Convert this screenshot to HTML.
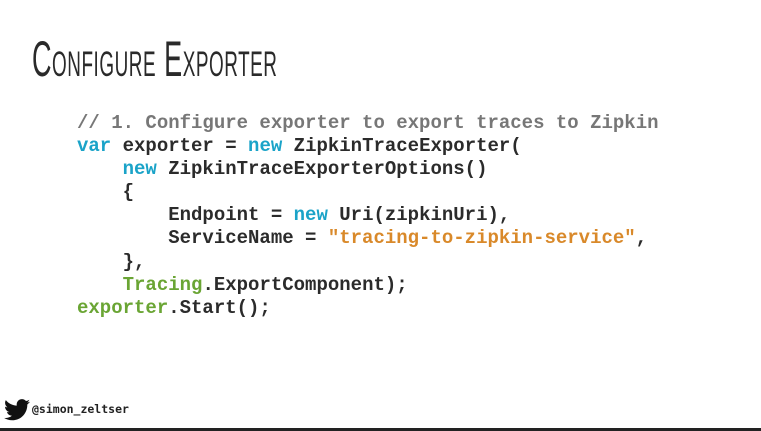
<!DOCTYPE html>
<html><head><meta charset="utf-8"><style>
html,body{margin:0;padding:0;}
body{width:761px;height:431px;background:#fff;position:relative;overflow:hidden;}
.title{position:absolute;left:32px;top:30px;font-family:"Liberation Sans",sans-serif;font-variant:small-caps;font-size:50px;color:#2a2a2a;transform:scaleX(0.54);transform-origin:left top;white-space:nowrap;letter-spacing:1px;}
pre{position:absolute;left:77px;top:112px;margin:0;font-family:"Liberation Mono",monospace;font-weight:bold;font-size:19px;line-height:23.1px;color:#2b2b2b;}
.c{color:#777;}
.k{color:#1aa3c8;}
.s{color:#d9892a;}
.g{color:#6aa534;}
.foot{position:absolute;left:32px;top:402px;font-family:"DejaVu Sans Mono","Liberation Mono",monospace;font-weight:bold;font-size:11.5px;color:#222;}
.bot{position:absolute;left:0;top:428px;width:761px;height:3px;background:#222;}
</style></head><body>
<div class="title">Configure Exporter</div>
<pre><span class="c">// 1. Configure exporter to export traces to Zipkin</span>
<span class="k">var</span> exporter = <span class="k">new</span> ZipkinTraceExporter(
    <span class="k">new</span> ZipkinTraceExporterOptions()
    {
        Endpoint = <span class="k">new</span> Uri(zipkinUri),
        ServiceName = <span class="s">"tracing-to-zipkin-service"</span>,
    },
    <span class="g">Tracing</span>.ExportComponent);
<span class="g">exporter</span>.Start();</pre>
<svg style="position:absolute;left:4px;top:399px" width="26" height="22" viewBox="0 0 24 20"><path fill="#111" d="M24 2.4c-.9.4-1.8.6-2.8.8 1-.6 1.8-1.6 2.2-2.7-1 .6-2 1-3.1 1.2C19.4.7 18.1 0 16.6 0c-2.7 0-4.9 2.2-4.9 4.9 0 .4 0 .8.1 1.1C7.7 5.8 4.1 3.900 1.7.9c-.4.7-.7 1.6-.7 2.5 0 1.7.9 3.2 2.2 4.1-.8 0-1.6-.2-2.2-.6v.1c0 2.4 1.7 4.4 3.9 4.8-.4.1-.8.2-1.300.2-.3 0-.6 0-.9-.1.6 2 2.4 3.4 4.6 3.4-1.7 1.3-3.8 2.1-6.1 2.1-.4 0-.8 0-1.2-.1 2.2 1.4 4.8 2.2 7.5 2.2 9.1 0 14-7.5 14-14v-.6c1-.7 1.8-1.6 2.5-2.5z"/></svg>
<div class="foot">@simon_zeltser</div>
<div class="bot"></div>
</body></html>
